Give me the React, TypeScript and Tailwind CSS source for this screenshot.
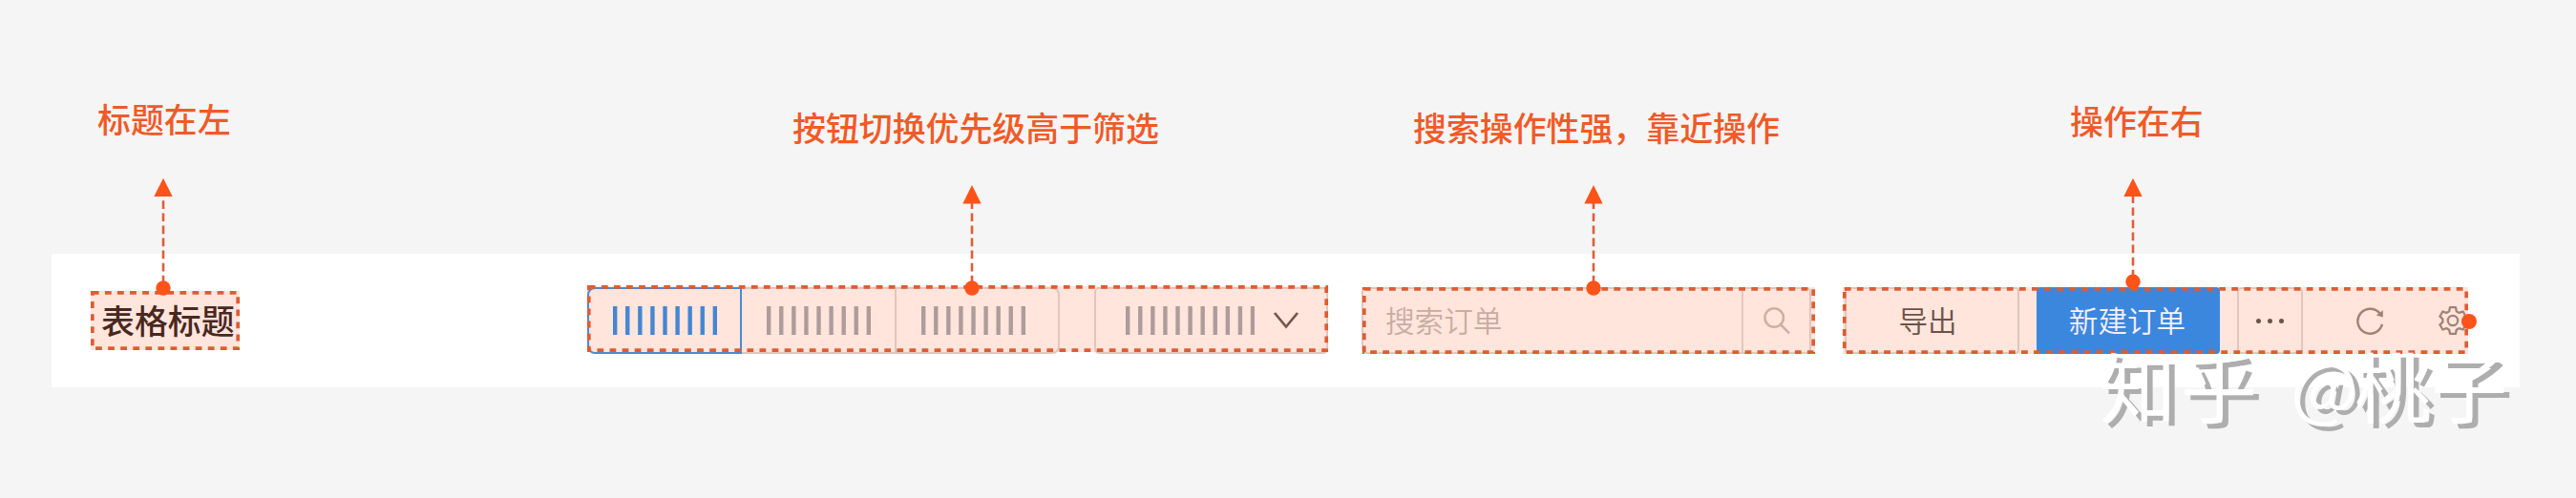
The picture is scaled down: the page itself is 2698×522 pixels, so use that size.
import React from 'react';

interface LabelProps {
    text: string;
    className: string;
}

interface FrameProps {
    width: number;
    height: number;
    offset?: number;
    className: string;
}

interface PointerProps {
    tip: number;
    dot: number;
    dashStart: number;
    className: string;
}

const Label: React.FC<LabelProps> = ({ text, className }) => (
    <div className={`shrink-0 whitespace-nowrap text-[34.9px] leading-[50px] font-medium text-[#f05a28] ${className}`}>{text}</div>
);

// Dashed outline that marks one region of the toolbar
const Frame: React.FC<FrameProps> = ({ width, height, offset = 0, className }) => (
    <svg className={`absolute pointer-events-none overflow-visible ${className}`} width={width} height={height}>
        <rect
            x="1.8"
            y="1.8"
            width={width - 3.6}
            height={height - 3.6}
            fill="none"
            stroke="#de5c33"
            strokeWidth="3.7"
            strokeDasharray="6.8 6.28"
            strokeDashoffset={offset}
        />
    </svg>
);

// Arrow from a region up to its label, all values are page y coordinates
const Pointer: React.FC<PointerProps> = ({ tip, dot, dashStart, className }) => (
    <svg className={`absolute pointer-events-none overflow-visible ${className}`} width="20" height="130" viewBox="0 180 20 130">
        <line x1="10" y1={dashStart} x2="10" y2={dot} stroke="#dc5f38" strokeWidth="2.6" strokeDasharray="8.7 4.38" />
        <path d={`M10 ${tip}L19.7 ${tip + 19.4}H0.3Z`} fill="#ff531a" />
        <circle cx="10" cy={dot} r="7.7" fill="#ff531a" />
    </svg>
);

const Bars: React.FC<{ count: number; color: string }> = ({ count, color }) => (
    <svg className="shrink-0" width={count * 13.08 - 8.7} height="30">
        <line x1="0" y1="15" x2={count * 13.08} y2="15" stroke={color} strokeWidth="30" strokeDasharray="4.38 8.7" />
    </svg>
);

const SearchIcon = () => (
    <svg width="30" height="30" viewBox="0 0 30 30" fill="none" stroke="#ccb0a6" strokeWidth="2.5">
        <circle cx="12.2" cy="12" r="9.8" />
        <path d="M18.8 19L28 28.3" />
    </svg>
);

const RefreshIcon = () => (
    <svg width="30" height="30" viewBox="0 0 30 30" fill="none" stroke="#a08378" strokeWidth="2.4">
        <path d="M28 18.9A13 13 0 1 1 26.3 8.6" />
        <path d="M28.8 4.2V11.4L21.8 9.6Z" fill="#a08378" stroke="none" />
    </svg>
);

const GearIcon = () => (
    <svg width="30" height="30" viewBox="0 0 30 30" fill="none" stroke="#a08378" strokeWidth="2.3" strokeLinejoin="round">
        <path d="M12 1.2H18L18.8 5.2L21.7 6.9L25.6 5.5L28.6 10.7L25.6 13.3V16.7L28.6 19.3L25.6 24.5L21.7 23.1L18.8 24.8L18 28.8H12L11.2 24.8L8.3 23.1L4.4 24.5L1.4 19.3L4.4 16.7V13.3L1.4 10.7L4.4 5.5L8.3 6.9L11.2 5.2Z" />
        <circle cx="15" cy="15" r="5.2" />
    </svg>
);

const App: React.FC = () => {
    return (
        <div className="relative w-[2698px] h-[522px] overflow-hidden bg-[#f5f5f5] font-['Noto_Sans_CJK_SC',sans-serif]">
            {/* Annotations */}
            <div className="flex h-[266px] items-start">
                <Label text="标题在左" className="ml-[102px] mt-[99px] w-[140px]" />
                <Label text="按钮切换优先级高于筛选" className="ml-[588px] mt-[108px] w-[385px]" />
                <Label text="搜索操作性强，靠近操作" className="ml-[265px] mt-[108px] w-[385px]" />
                <Label text="操作在右" className="ml-[303px] mt-[101px] w-[140px]" />
            </div>

            {/* Toolbar */}
            <div className="ml-[54px] mr-[59px] flex h-[140px] items-start bg-white">
                {/* Title */}
                <div className="relative ml-[41px] mt-[39px] flex h-[62px] w-[156px] items-center bg-[#ffe5dc]">
                    <h1 className="ml-[11px] mb-[2px] whitespace-nowrap text-[34.9px] leading-[50px] font-medium text-[#49281f]">表格标题</h1>
                    <Frame width={156} height={62} className="left-0 top-0" />
                    <Pointer tip={186.7} dot={302} dashStart={210.3} className="left-[66px] -top-[125px]" />
                </div>

                {/* Tabs and filter */}
                <div className="relative ml-[364px] mt-[33px] flex h-[72px] w-[776px] items-start pt-[2px]">
                    <div className="absolute inset-x-0 top-[1px] h-[69px] bg-[#ffe5dc]"></div>
                    <div className="relative flex h-[70px] w-[162px] items-center rounded-l-[8px] border-2 border-[#4a8ad4] pl-[25px]">
                        <Bars count={9} color="#4586d3" />
                    </div>
                    <div className="relative flex h-[70px] w-[162px] items-center border-y-2 border-r-2 border-[#dfc6be] pl-[26px]">
                        <Bars count={9} color="#ae9c9b" />
                    </div>
                    <div className="relative flex h-[70px] w-[171px] items-center rounded-r-[8px] border-y-2 border-r-2 border-[#dfc6be] pl-[26px]">
                        <Bars count={9} color="#ae9c9b" />
                    </div>
                    <div className="relative ml-[36px] flex h-[70px] w-[245px] items-center rounded-[5px] border-2 border-[#dfc6be] pl-[31px]">
                        <Bars count={11} color="#ae9c9b" />
                        <svg className="ml-[19px]" width="28" height="20" viewBox="0 0 28 20" fill="none" stroke="#71564c" strokeWidth="2.7">
                            <path d="M2 2L14 16.5L26 2" />
                        </svg>
                    </div>
                    <Frame width={776} height={70} className="left-0 top-0" />
                    <Pointer tip={194} dot={302} dashStart={210.3} className="left-[393px] -top-[119px]" />
                </div>

                {/* Search */}
                <div className="relative ml-[35px] mt-[35px] flex h-[70px] w-[475px] items-start bg-[#ffe5dc]">
                    <div className="flex h-[70px] w-[471px] items-center rounded-[5px] border-2 border-[#dfc6be]">
                        <span className="w-[396px] pb-[2px] pl-[23px] text-[30.6px] leading-[44px] font-[350] text-[#c9ada3]">搜索订单</span>
                        <div className="flex h-full flex-1 items-center justify-center border-l-2 border-[#dfc6be]">
                            <SearchIcon />
                        </div>
                    </div>
                    <Frame width={474} height={70} className="left-[1px] top-0" />
                    <Pointer tip={194} dot={302} dashStart={210.3} className="left-[233px] -top-[121px]" />
                </div>

                {/* Actions */}
                <div className="relative ml-[29px] mt-[35px] flex h-[70px] w-[655px] items-start bg-[#ffe5dc]">
                    <button className="ml-[2px] h-[70px] w-[183px] rounded-[4px] border-2 border-[#dfc6be] pr-[9px] pb-[2px] text-[30.6px] leading-[44px] font-[350] text-[#6d5147]">导出</button>
                    <button className="ml-[18px] h-[70px] w-[192px] rounded-[4px] bg-[#3b87dd] pr-[2px] pb-[2px] text-[30.6px] leading-[44px] font-[350] text-[#f5efff]">新建订单</button>
                    <button className="ml-[18px] flex h-[70px] w-[69px] items-center justify-center gap-[7px] rounded-[5px] border-2 border-[#dfc6be]">
                        <i className="size-[5px] rounded-full bg-[#6d5147]"></i>
                        <i className="size-[5px] rounded-full bg-[#6d5147]"></i>
                        <i className="size-[5px] rounded-full bg-[#6d5147]"></i>
                    </button>
                    <div className="ml-[55px] mt-[20px] flex gap-[57px]">
                        <RefreshIcon />
                        <GearIcon />
                    </div>
                    <Frame width={655} height={70} className="left-0 top-0" />
                    <Pointer tip={186.7} dot={295.3} dashStart={204.3} className="left-[294px] -top-[121px]" />
                    <div className="absolute -right-[9px] top-[28px] size-[16px] rounded-full bg-[#ff531a]"></div>
                </div>
            </div>

            {/* Watermark */}
            <div className="absolute left-[2199px] top-[356px] flex whitespace-nowrap text-[80px] leading-[92px] text-white [text-shadow:6px_5px_0_#aeaeae]">
                <span className="w-[200px] tracking-[5px]">知乎</span>
                <span className="w-[67px] text-[75px]">@</span>
                <span>桃子</span>
            </div>
        </div>
    );
};

export default App;
